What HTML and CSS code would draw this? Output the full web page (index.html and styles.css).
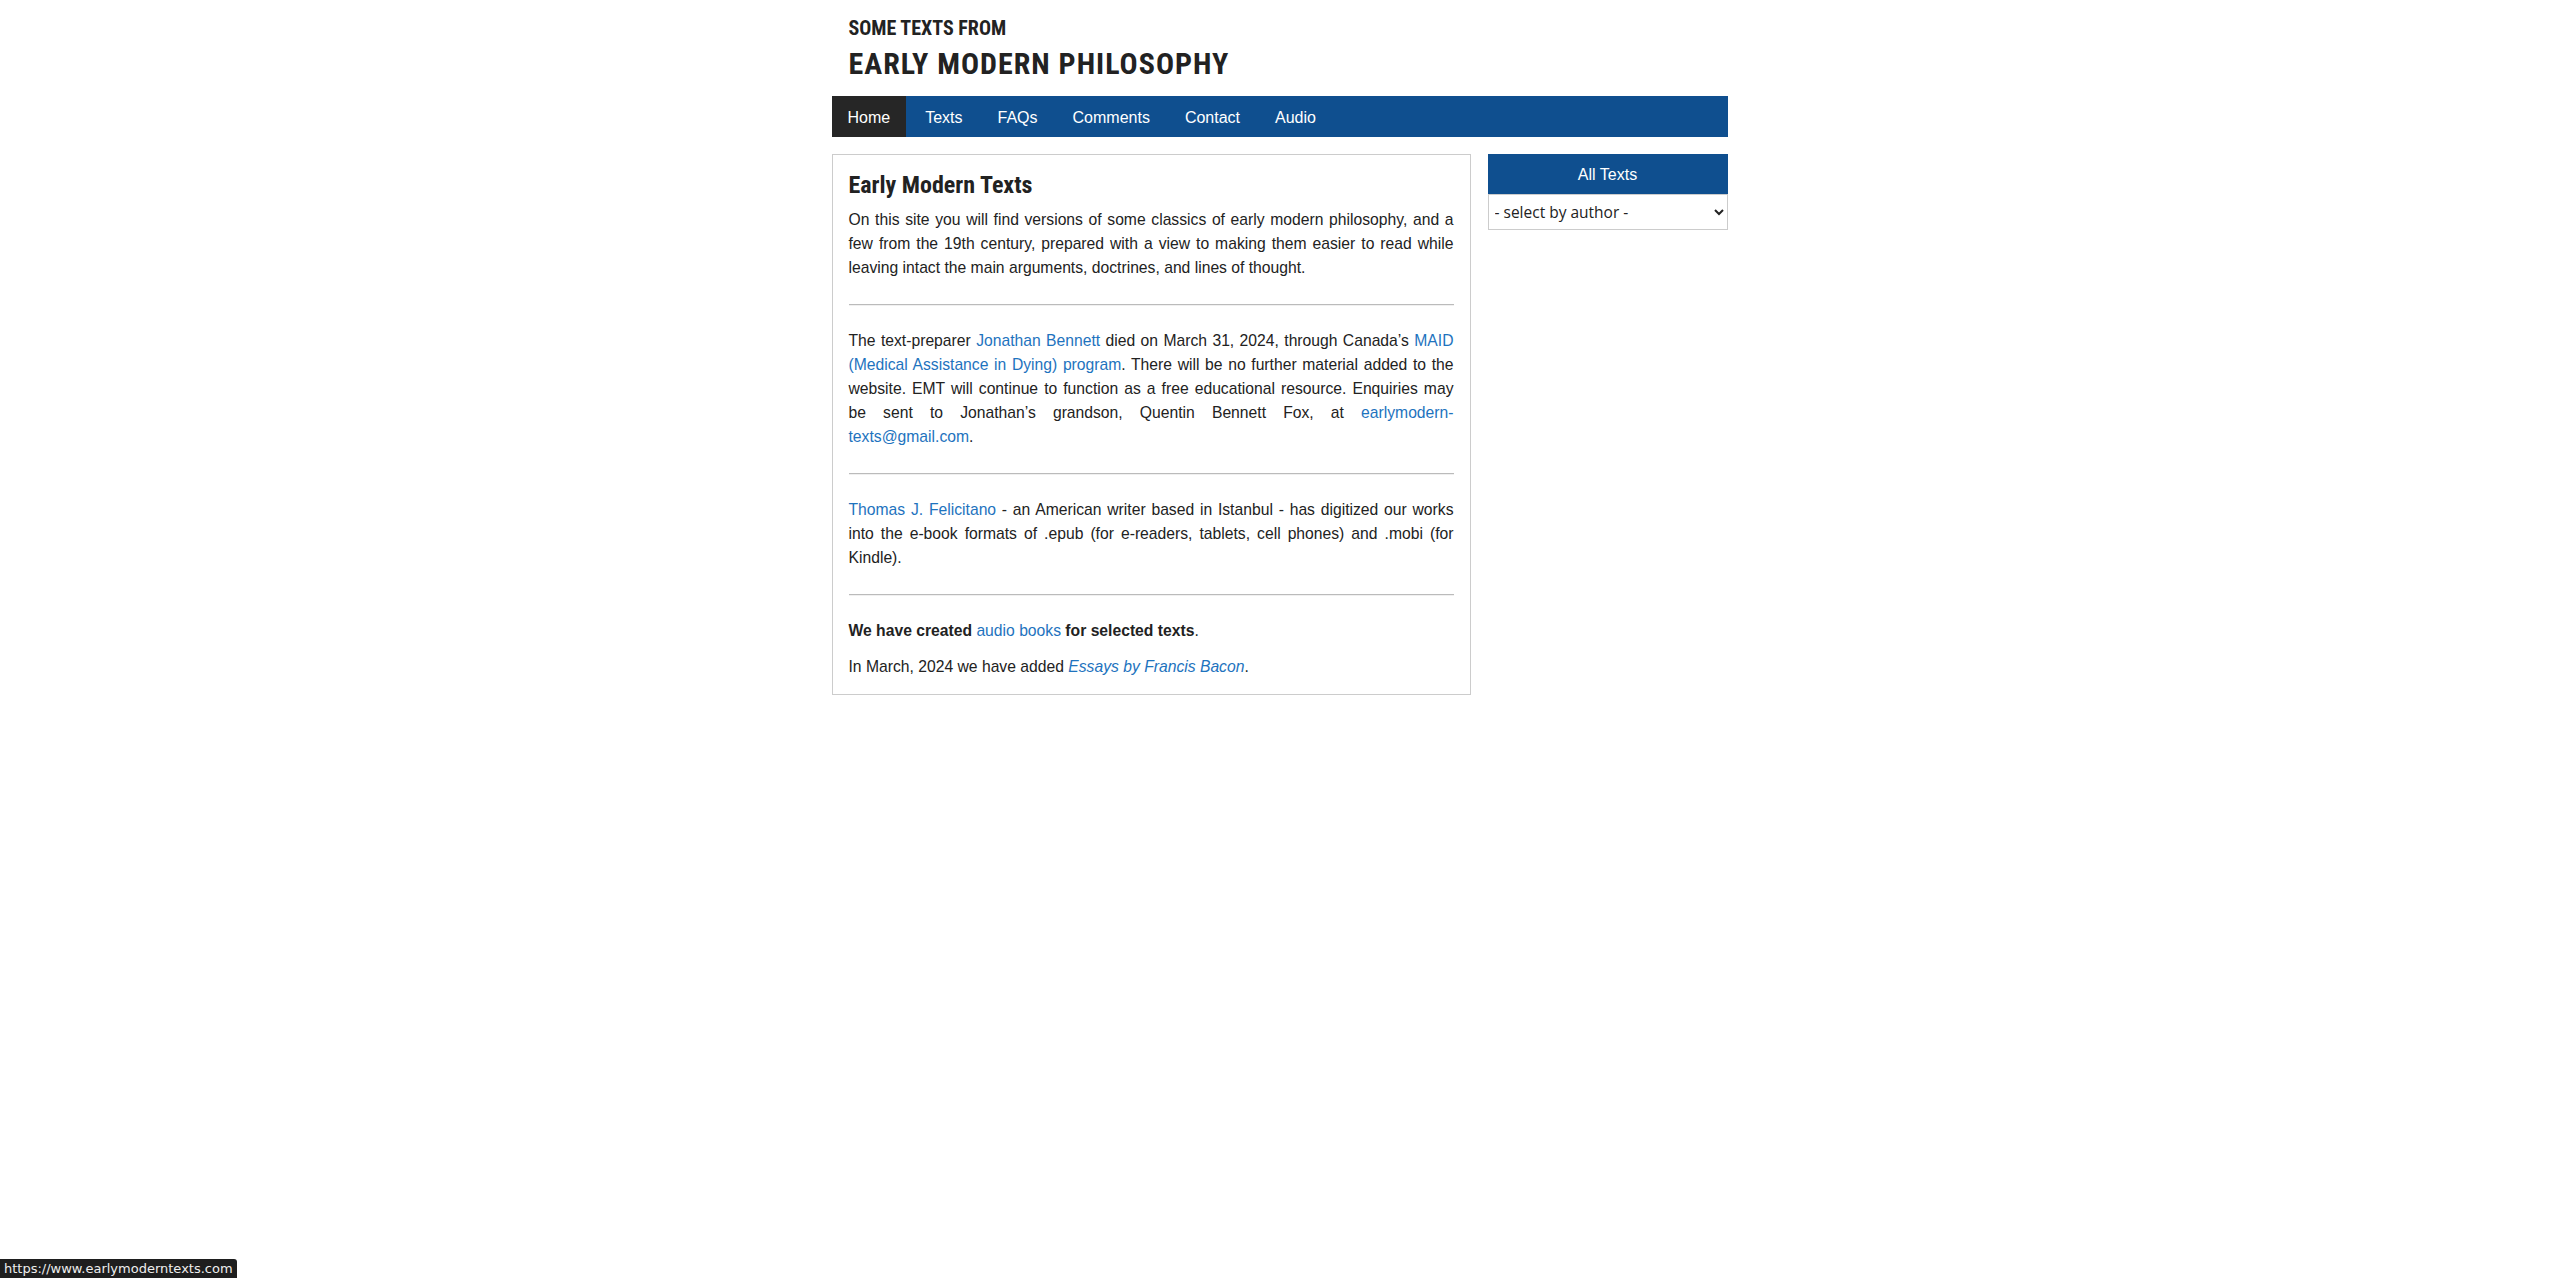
FILE: index.html
```html
<!DOCTYPE html>
<html lang="en">
<head>
<meta charset="utf-8">
<title>Early Modern Texts</title>
<link rel="stylesheet" href="styles.css">
</head>
<body>
<div class="wrap">
  <header class="site-header">
    <div class="site-sub">SOME TEXTS FROM</div>
    <div class="site-title">EARLY MODERN PHILOSOPHY</div>
  </header>
  <nav class="nav">
    <a class="nav-item active" href="#">Home</a>
    <a class="nav-item" href="#">Texts</a>
    <a class="nav-item" href="#">FAQs</a>
    <a class="nav-item" href="#">Comments</a>
    <a class="nav-item" href="#">Contact</a>
    <a class="nav-item" href="#">Audio</a>
  </nav>
  <div class="content">
    <main class="main-box">
      <h1 class="title">Early Modern Texts</h1>
      <p>On this site you will find versions of some classics of early modern philosophy, and a few from the 19th century, prepared with a view to making them easier to read while leaving intact the main arguments, doctrines, and lines of thought.</p>
      <hr>
      <p>The text-preparer <a href="#">Jonathan Bennett</a> died on March 31, 2024, through Canada’s <a href="#">MAID (Medical Assistance in Dying) program</a>. There will be no further material added to the website. EMT will continue to function as a free educational resource. Enquiries may be sent to Jonathan’s grandson, Quentin Bennett Fox, at <a href="#">earlymodern-texts@gmail.com</a>.</p>
      <hr>
      <p><a href="#">Thomas J. Felicitano</a> - an American writer based in Istanbul - has digitized our works into the e-book formats of .epub (for e-readers, tablets, cell phones) and .mobi (for Kindle).</p>
      <hr>
      <p class="bold-line"><strong>We have created</strong> <a href="#">audio books</a> <strong>for selected texts</strong>.</p>
      <p class="last-line">In March, 2024 we have added <a href="#"><em>Essays by Francis Bacon</em></a>.</p>
    </main>
    <aside class="sidebar">
      <div class="side-head">All Texts</div>
      <select class="author-select">
        <option>- select by author -</option>
      </select>
    </aside>
  </div>
</div>
<div class="status">https://www.earlymoderntexts.com</div>
</body>
</html>
```
FILE: styles.css
```css
html, body {
  margin: 0;
  padding: 0;
  background: #fff;
}
body {
  font-family: "Liberation Sans", Arial, sans-serif;
  color: #222;
}
.wrap {
  width: 896px;
  margin: 0 auto;
}
.site-header {
  padding: 16px 0 14px 17px;
  color: #222;
  font-family: Roboto, "Liberation Sans", sans-serif;
  font-weight: 700;
  font-stretch: condensed;
}
.site-sub {
  font-size: 20px;
  line-height: 24px;
}
.site-title {
  margin-top: 6px;
  font-size: 30px;
  line-height: 36px;
  letter-spacing: 1px;
}
.nav {
  display: flex;
  height: 41px;
  background: #0f4f8f;
}
.nav-item {
  display: flex;
  align-items: center;
  padding: 2px 16px 0 16px;
  margin-right: 3px;
  color: #fff;
  text-decoration: none;
  font-size: 16px;
}
.nav-item.active {
  background: #262626;
}
.content {
  display: flex;
  align-items: flex-start;
  gap: 17px;
  margin-top: 17px;
}
.main-box {
  width: 639px;
  box-sizing: border-box;
  border: 1px solid #ccc;
  padding: 15px 16px 15px 16px;
  font-size: 15.7px;
  line-height: 24px;
}
.title {
  margin: 0 0 8px 0;
  font-family: Roboto, "Liberation Sans", sans-serif;
  font-weight: 700;
  font-stretch: condensed;
  font-size: 24px;
  line-height: 30px;
  color: #222;
}
.main-box p {
  margin: 0;
  text-align: justify;
}
.main-box hr {
  border: 0;
  border-top: 1px solid #bbb;
  border-bottom: 1px solid #f0f0f0;
  margin: 24px 0 23px 0;
  height: 0;
}
.main-box a {
  color: #1e73be;
  text-decoration: none;
}
.last-line {
  margin-top: 12px !important;
}
.sidebar {
  width: 240px;
}
.side-head {
  height: 40px;
  display: flex;
  align-items: center;
  justify-content: center;
  padding-top: 2px;
  box-sizing: border-box;
  background: #0f4f8f;
  color: #fff;
  font-size: 16px;
}
.author-select {
  display: block;
  width: 100%;
  height: 36px;
  box-sizing: border-box;
  border: 1px solid #ccc;
  background: #fff;
  color: #222;
  font-family: "Open Sans", "DejaVu Sans", sans-serif;
  font-size: 15.5px;
  padding: 0 2px;
}
.status {
  position: fixed;
  left: 0;
  bottom: 0;
  height: 19px;
  line-height: 19px;
  padding: 0 4px;
  background: #1e1e1e;
  color: #eee;
  font-family: "DejaVu Sans", sans-serif;
  font-size: 13px;
  border-top-right-radius: 3px;
}
```
